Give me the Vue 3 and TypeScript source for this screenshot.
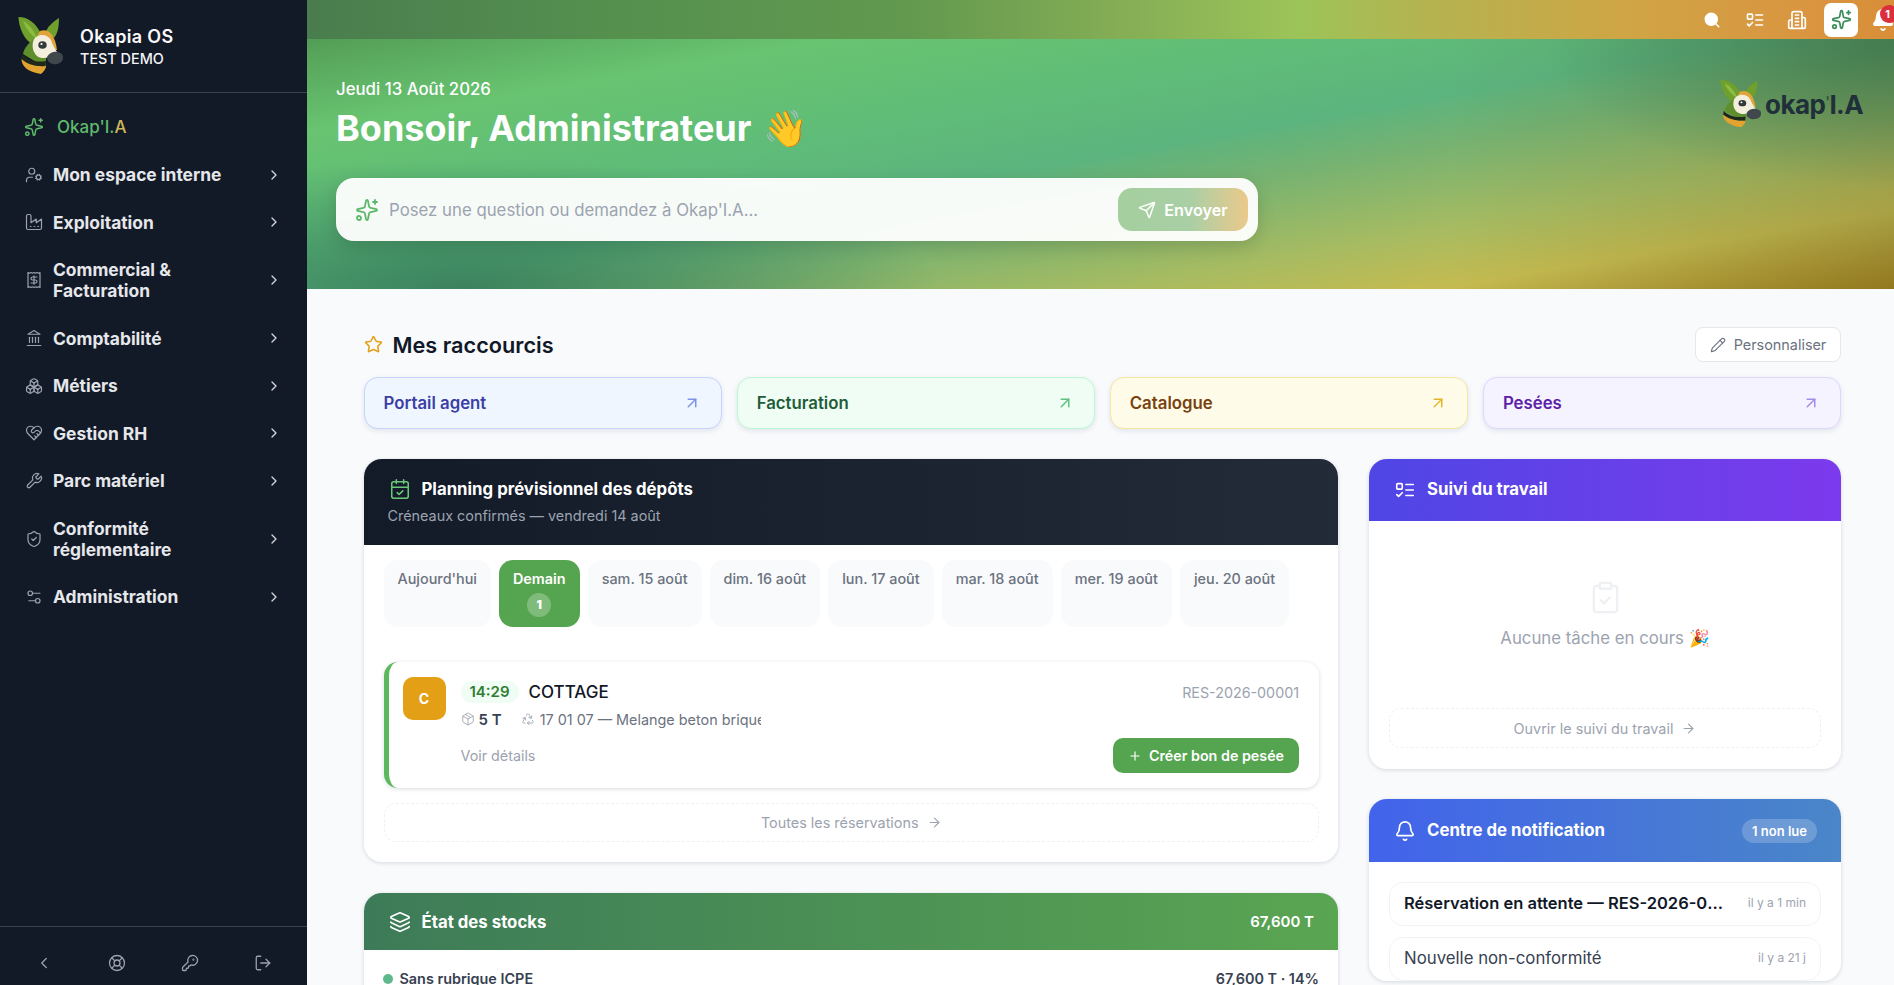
<script setup lang="ts">
// Tableau de bord Okapia : tout est statique, les icônes sont des tracés inline.
const icons: Record<string, string> = {
  sparkles:
    '<path d="M11.017 2.814a1 1 0 0 1 1.966 0l1.051 5.558a2 2 0 0 0 1.594 1.594l5.558 1.051a1 1 0 0 1 0 1.966l-5.558 1.051a2 2 0 0 0-1.594 1.594l-1.051 5.558a1 1 0 0 1-1.966 0l-1.051-5.558a2 2 0 0 0-1.594-1.594l-5.558-1.051a1 1 0 0 1 0-1.966l5.558-1.051a2 2 0 0 0 1.594-1.594z"/><path d="M20 2v4"/><path d="M22 4h-4"/><circle cx="4" cy="20" r="2"/>',
  userCog:
    '<circle cx="18" cy="15" r="3"/><circle cx="9" cy="7" r="4"/><path d="M10 15H6a4 4 0 0 0-4 4v2"/><path d="m21.7 16.4-.9-.3"/><path d="m15.2 13.9-.9-.3"/><path d="m16.6 18.7.3-.9"/><path d="m19.1 12.2.3-.9"/><path d="m19.6 18.7-.4-1"/><path d="m16.8 12.3-.4-1"/><path d="m14.3 16.6 1-.4"/><path d="m20.7 13.8 1-.4"/>',
  factory:
    '<path d="M2 20a2 2 0 0 0 2 2h16a2 2 0 0 0 2-2V8l-7 5V8l-7 5V4a2 2 0 0 0-2-2H4a2 2 0 0 0-2 2Z"/><path d="M17 18h1"/><path d="M12 18h1"/><path d="M7 18h1"/>',
  receipt:
    '<path d="M4 2v20l2-1 2 1 2-1 2 1 2-1 2 1 2-1 2 1V2l-2 1-2-1-2 1-2-1-2 1-2-1-2 1Z"/><path d="M16 8h-6a2 2 0 1 0 0 4h4a2 2 0 1 1 0 4H8"/><path d="M12 17.5v-11"/>',
  landmark:
    '<path d="M3 22h18"/><path d="M6 18v-7"/><path d="M10 18v-7"/><path d="M14 18v-7"/><path d="M18 18v-7"/><path d="M12 2l8 5H4z"/>',
  boxes:
    '<path d="M2.97 12.92A2 2 0 0 0 2 14.63v3.24a2 2 0 0 0 .97 1.71l3 1.8a2 2 0 0 0 2.06 0L12 19v-5.5l-5-3-4.03 2.42Z"/><path d="m7 16.5-4.74-2.85"/><path d="m7 16.5 5-3"/><path d="M7 16.5v5.17"/><path d="M12 13.5V19l3.97 2.38a2 2 0 0 0 2.06 0l3-1.8a2 2 0 0 0 .97-1.71v-3.24a2 2 0 0 0-.97-1.71L17 10.5l-5 3Z"/><path d="m17 16.5-5-3"/><path d="m17 16.5 4.74-2.85"/><path d="M17 16.5v5.17"/><path d="M7.97 4.42A2 2 0 0 0 7 6.13v4.37l5 3 5-3V6.13a2 2 0 0 0-.97-1.71l-3-1.8a2 2 0 0 0-2.06 0l-3 1.8Z"/><path d="M12 8 7.26 5.15"/><path d="m12 8 4.74-2.85"/><path d="M12 13.5V8"/>',
  heart:
    '<path d="M19 14c1.49-1.46 3-3.21 3-5.5A5.5 5.5 0 0 0 16.5 3c-1.76 0-3 .5-4.5 2-1.5-1.5-2.74-2-4.5-2A5.5 5.5 0 0 0 2 8.5c0 2.3 1.5 4.05 3 5.5l7 7Z"/><path d="M12 5 9.04 7.96a2.17 2.17 0 0 0 0 3.08c.82.82 2.13.85 3 .07l2.07-1.9a2.82 2.82 0 0 1 3.79 0l2.96 2.66"/><path d="m18 15-2-2"/><path d="m15 18-2-2"/>',
  wrench:
    '<path d="M14.7 6.3a1 1 0 0 0 0 1.4l1.6 1.6a1 1 0 0 0 1.4 0l3.77-3.77a6 6 0 0 1-7.94 7.94l-6.91 6.91a2.12 2.12 0 0 1-3-3l6.91-6.91a6 6 0 0 1 7.94-7.94l-3.76 3.76z"/>',
  shield:
    '<path d="M20 13c0 5-3.5 7.5-7.66 8.95a1 1 0 0 1-.67-.01C7.5 20.5 4 18 4 13V6a1 1 0 0 1 1-1c2 0 4.5-1.2 6.24-2.72a1.17 1.17 0 0 1 1.52 0C14.51 3.81 17 5 19 5a1 1 0 0 1 1 1z"/><path d="m9 12 2 2 4-4"/>',
  sliders:
    '<path d="M20 7h-9"/><path d="M14 17H5"/><circle cx="17" cy="17" r="3"/><circle cx="7" cy="7" r="3"/>',
  chevronRight: '<path d="m9 18 6-6-6-6"/>',
  chevronLeft: '<path d="m15 18-6-6 6-6"/>',
  buoy:
    '<circle cx="12" cy="12" r="10"/><path d="m4.93 4.93 4.24 4.24"/><path d="m14.83 9.17 4.24-4.24"/><path d="m14.83 14.83 4.24 4.24"/><path d="m9.17 14.83-4.24 4.24"/><circle cx="12" cy="12" r="4"/>',
  key:
    '<path d="M2.586 17.414A2 2 0 0 0 2 18.828V21a1 1 0 0 0 1 1h3a1 1 0 0 0 1-1v-1a1 1 0 0 1 1-1h1a1 1 0 0 0 1-1v-1a1 1 0 0 1 1-1h.172a2 2 0 0 0 1.414-.586l.814-.814a6.5 6.5 0 1 0-4-4z"/><circle cx="16.5" cy="7.5" r=".5"/>',
  logout:
    '<path d="M9 21H5a2 2 0 0 1-2-2V5a2 2 0 0 1 2-2h4"/><path d="m16 17 5-5-5-5"/><path d="M21 12H9"/>',
  search: '<circle cx="11" cy="11" r="8" fill="currentColor"/><path d="m21 21-4.3-4.3"/>',
  todo:
    '<rect x="3" y="5" width="6" height="6" rx="1"/><path d="m3 17 2 2 4-4"/><path d="M13 6h8"/><path d="M13 12h8"/><path d="M13 18h8"/>',
  building:
    '<path d="M6 22V4a2 2 0 0 1 2-2h8a2 2 0 0 1 2 2v18Z"/><path d="M6 12H4a2 2 0 0 0-2 2v6a2 2 0 0 0 2 2h2"/><path d="M18 9h2a2 2 0 0 1 2 2v9a2 2 0 0 1-2 2h-2"/><path d="M10 6h4"/><path d="M10 10h4"/><path d="M10 14h4"/><path d="M10 18h4"/>',
  bell:
    '<path d="M10.268 21a2 2 0 0 0 3.464 0"/><path d="M3.262 15.326A1 1 0 0 0 4 17h16a1 1 0 0 0 .74-1.673C19.41 13.956 18 12.499 18 8A6 6 0 0 0 6 8c0 4.499-1.411 5.956-2.738 7.326"/>',
  send:
    '<path d="M14.536 21.686a.5.5 0 0 0 .937-.024l6.5-19a.496.496 0 0 0-.635-.635l-19 6.5a.5.5 0 0 0-.024.937l7.93 3.18a2 2 0 0 1 1.112 1.11z"/><path d="m21.854 2.147-10.94 10.939"/>',
  star:
    '<path d="M11.525 2.295a.53.53 0 0 1 .95 0l2.31 4.679a2.123 2.123 0 0 0 1.595 1.16l5.166.756a.53.53 0 0 1 .294.904l-3.736 3.638a2.123 2.123 0 0 0-.611 1.878l.882 5.14a.53.53 0 0 1-.771.56l-4.618-2.428a2.122 2.122 0 0 0-1.973 0L6.396 21.01a.53.53 0 0 1-.77-.56l.881-5.139a2.122 2.122 0 0 0-.611-1.879L2.16 9.795a.53.53 0 0 1 .294-.906l5.165-.755a2.122 2.122 0 0 0 1.597-1.16z"/>',
  pencil:
    '<path d="M21.174 6.812a1 1 0 0 0-3.986-3.987L3.842 16.174a2 2 0 0 0-.5.83l-1.321 4.352a.5.5 0 0 0 .623.622l4.353-1.32a2 2 0 0 0 .83-.497z"/><path d="m15 5 4 4"/>',
  upRight: '<path d="M7 7h10v10"/><path d="M7 17 17 7"/>',
  calendar:
    '<path d="M8 2v4"/><path d="M16 2v4"/><rect x="3" y="4" width="18" height="18" rx="2"/><path d="M3 10h18"/><path d="m9 16 2 2 4-4"/>',
  layers:
    '<path d="M12.83 2.18a2 2 0 0 0-1.66 0L2.6 6.08a1 1 0 0 0 0 1.83l8.58 3.91a2 2 0 0 0 1.66 0l8.58-3.9a1 1 0 0 0 0-1.83z"/><path d="M2 12a1 1 0 0 0 .58.91l8.6 3.91a2 2 0 0 0 1.65 0l8.58-3.9A1 1 0 0 0 22 12"/><path d="M2 17a1 1 0 0 0 .58.91l8.6 3.91a2 2 0 0 0 1.65 0l8.58-3.9A1 1 0 0 0 22 17"/>',
  pack:
    '<path d="M11 21.73a2 2 0 0 0 2 0l7-4A2 2 0 0 0 21 16V8a2 2 0 0 0-1-1.73l-7-4a2 2 0 0 0-2 0l-7 4A2 2 0 0 0 3 8v8a2 2 0 0 0 1 1.73z"/><path d="M12 22V12"/><path d="m3.3 7 8.7 5 8.7-5"/><path d="m7.5 4.27 9 5.15"/>',
  recycle:
    '<path d="M7 19H4.815a1.83 1.83 0 0 1-1.57-.881 1.785 1.785 0 0 1-.004-1.784L7.196 9.5"/><path d="M11 19h8.203a1.83 1.83 0 0 0 1.556-.89 1.784 1.784 0 0 0 0-1.775l-1.226-2.12"/><path d="m14 16-3 3 3 3"/><path d="M8.293 13.596 7.196 9.5 3.1 10.598"/><path d="m9.344 5.811 1.093-1.892A1.83 1.83 0 0 1 11.985 3a1.784 1.784 0 0 1 1.546.888l3.943 6.843"/><path d="m13.378 9.633 4.096 1.098 1.097-4.096"/>',
  clipboard:
    '<rect x="8" y="2" width="8" height="4" rx="1"/><path d="M16 4h2a2 2 0 0 1 2 2v14a2 2 0 0 1-2 2H6a2 2 0 0 1-2-2V6a2 2 0 0 1 2-2h2"/><path d="m9 14 2 2 4-4"/>',
  arrowRight: '<path d="M5 12h14"/><path d="m12 5 7 7-7 7"/>',
  plus: '<path d="M5 12h14"/><path d="M12 5v14"/>',
};

// La tête d'okapi sert deux fois : barre latérale et bandeau.
const logoShapes = [
  { d: "M.5 1C10 1 18 7 23 18c1 4-1 10-5 12C8 27 1 14 .5 1z", fill: "#6f9f2d" },
  { d: "M5 5c6 3 11 9 14 18-6-4-11-10-14-18z", fill: "#8dbc42" },
  { d: "M41 2c0 8-1 15-5 20l-8-7c3-6 8-10 13-13z", fill: "#6f9f2d" },
  { d: "M22 15c8-3 15 3 17 19l-14 2-8-12z", fill: "#e0a43a" },
  { d: "M17 23C11 26 6 32 5 38l23 14V42z", fill: "#5f8f2c" },
  { d: "M4 38c5 6 14 9 24 7l-.5 5C17 51 9 48 3.5 43z", fill: "#20281a" },
  { d: "M3.5 43c0 7 6 13 19.500 15 3-3 5-5 5-8C17 51 9 48 3.500 43z", fill: "#e2a331" },
  { d: "M15 26c2-8 13-10 18-2 2 6 5 10 6 12-6 6-15 8-20 4-4-4-5-9-4-14z", fill: "#f3efdc" },
  { d: "M29 41c3-6 12-7 15.500-2 1.500 4-.5 8-5.500 9-6 1-10-2-10-7z", fill: "#40474d" },
];

const nav = [
  { label: "Mon espace interne", icon: "userCog" },
  { label: "Exploitation", icon: "factory" },
  { label: "Commercial & Facturation", icon: "receipt" },
  { label: "Comptabilité", icon: "landmark" },
  { label: "Métiers", icon: "boxes" },
  { label: "Gestion RH", icon: "heart" },
  { label: "Parc matériel", icon: "wrench" },
  { label: "Conformité réglementaire", icon: "shield" },
  { label: "Administration", icon: "sliders" },
];

const footerIcons = ["chevronLeft", "buoy", "key", "logout"];

const shortcuts = [
  { label: "Portail agent", tone: "blue" },
  { label: "Facturation", tone: "green" },
  { label: "Catalogue", tone: "yellow" },
  { label: "Pesées", tone: "violet" },
];

const days = [
  { label: "Aujourd'hui" },
  { label: "Demain", count: 1, active: true },
  { label: "sam. 15 août" },
  { label: "dim. 16 août" },
  { label: "lun. 17 août" },
  { label: "mar. 18 août" },
  { label: "mer. 19 août" },
  { label: "jeu. 20 août" },
];

const notifications = [
  { title: "Réservation en attente — RES-2026-00001 à valider", time: "il y a 1 min", unread: true },
  { title: "Nouvelle non-conformité", time: "il y a 21 j", unread: false },
];
</script>

<template>
  <div class="app">
    <aside class="sidebar">
      <div class="brand">
        <svg class="brand-logo" viewBox="0 0 46 60">
          <path v-for="s in logoShapes" :key="s.d" :d="s.d" :fill="s.fill" />
          <ellipse cx="24.500" cy="29" rx="4.200" ry="3.800" fill="#33393a" />
          <circle cx="23.500" cy="28" r="1.100" fill="#fff" />
        </svg>
        <div>
          <div class="brand-name">Okapia OS</div>
          <div class="brand-sub">TEST DEMO</div>
        </div>
      </div>

      <nav class="nav">
        <a class="nav-ia">
          <svg class="ic ia-icon" viewBox="0 0 24 24" v-html="icons.sparkles" />
          <span>Okap'I.<em>A</em></span>
        </a>
        <a v-for="item in nav" :key="item.label" class="nav-item">
          <svg class="ic nav-icon" viewBox="0 0 24 24" v-html="icons[item.icon]" />
          <span class="nav-label">{{ item.label }}</span>
          <svg class="ic nav-chevron" viewBox="0 0 24 24" v-html="icons.chevronRight" />
        </a>
      </nav>

      <div class="side-foot">
        <span v-for="name in footerIcons" :key="name" class="foot-btn">
          <svg class="ic" viewBox="0 0 24 24" v-html="icons[name]" />
        </span>
      </div>
    </aside>

    <main class="main">
      <section class="hero">
        <header class="topbar">
          <svg class="ic top-search" viewBox="0 0 24 24" v-html="icons.search" />
          <svg class="ic top-todo" viewBox="0 0 24 24" v-html="icons.todo" />
          <svg class="ic top-building" viewBox="0 0 24 24" v-html="icons.building" />
          <span class="top-active"><svg class="ic" viewBox="0 0 24 24" v-html="icons.sparkles" /></span>
          <span class="top-bell">
            <svg class="ic" viewBox="0 0 24 24" v-html="icons.bell" />
            <b class="bell-badge">1</b>
          </span>
        </header>

        <div class="hero-body">
          <div class="hero-left">
            <div class="hero-date">Jeudi 13 Août 2026</div>
            <h1 class="hero-title">Bonsoir, Administrateur <span class="wave">👋</span></h1>
            <div class="ask">
              <svg class="ic ask-icon" viewBox="0 0 24 24" v-html="icons.sparkles" />
              <span class="ask-text">Posez une question ou demandez à Okap'I.A...</span>
              <span class="ask-btn">
                <svg class="ic" viewBox="0 0 24 24" v-html="icons.send" />
                Envoyer
              </span>
            </div>
          </div>
          <div class="hero-logo">
            <svg class="hero-logo-mark" viewBox="0 0 46 60" preserveAspectRatio="none">
              <path v-for="s in logoShapes" :key="s.d" :d="s.d" :fill="s.fill" />
              <ellipse cx="24.500" cy="29" rx="4.200" ry="3.800" fill="#33393a" />
              <circle cx="23.500" cy="28" r="1.100" fill="#fff" />
            </svg>
            <span class="hero-logo-text">okap<small>'</small>I.A</span>
          </div>
        </div>
      </section>

      <section class="content">
        <div class="section-head">
          <svg class="ic star" viewBox="0 0 24 24" v-html="icons.star" />
          <h2>Mes raccourcis</h2>
          <span class="customize">
            <svg class="ic" viewBox="0 0 24 24" v-html="icons.pencil" />
            Personnaliser
          </span>
        </div>

        <div class="shortcuts">
          <a v-for="s in shortcuts" :key="s.label" class="shortcut" :class="s.tone">
            <span>{{ s.label }}</span>
            <svg class="ic" viewBox="0 0 24 24" v-html="icons.upRight" />
          </a>
        </div>

        <div class="columns">
          <div class="col">
            <article class="card">
              <header class="card-head dark">
                <div class="head-title">
                  <svg class="ic cal-icon" viewBox="0 0 24 24" v-html="icons.calendar" />
                  <span>Planning prévisionnel des dépôts</span>
                </div>
                <p class="head-sub">Créneaux confirmés — vendredi 14 août</p>
              </header>
              <div class="planning-body">
                <div class="days">
                  <div v-for="d in days" :key="d.label" class="day" :class="{ active: d.active }">
                    <span>{{ d.label }}</span>
                    <b v-if="d.count" class="day-count">{{ d.count }}</b>
                  </div>
                </div>

                <div class="res">
                  <div class="res-avatar">C</div>
                  <div class="res-main">
                    <div class="res-top">
                      <span class="res-time">14:29</span>
                      <span class="res-name">COTTAGE</span>
                      <span class="res-ref">RES-2026-00001</span>
                    </div>
                    <div class="res-meta">
                      <svg class="ic" viewBox="0 0 24 24" v-html="icons.pack" />
                      <b>5 T</b>
                      <svg class="ic meta-recycle" viewBox="0 0 24 24" v-html="icons.recycle" />
                      <span class="meta-waste">17 01 07 — Melange beton brique tuile ceramique</span>
                    </div>
                    <div class="res-actions">
                      <span class="res-link">Voir détails</span>
                      <span class="res-btn">
                        <svg class="ic" viewBox="0 0 24 24" v-html="icons.plus" />
                        Créer bon de pesée
                      </span>
                    </div>
                  </div>
                </div>

                <a class="dashed">
                  Toutes les réservations
                  <svg class="ic" viewBox="0 0 24 24" v-html="icons.arrowRight" />
                </a>
              </div>
            </article>

            <article class="card">
              <header class="card-head stock">
                <svg class="ic" viewBox="0 0 24 24" v-html="icons.layers" />
                <span class="head-name">État des stocks</span>
                <b class="stock-total">67,600 T</b>
              </header>
              <div class="stock-body">
                <div class="stock-row">
                  <i class="dot" />
                  <span>Sans rubrique ICPE</span>
                  <b>67,600 T · 14%</b>
                </div>
              </div>
            </article>
          </div>

          <div class="col right">
            <article class="card">
              <header class="card-head violet">
                <svg class="ic" viewBox="0 0 24 24" v-html="icons.todo" />
                <span class="head-name">Suivi du travail</span>
              </header>
              <div class="todo-body">
                <div class="empty">
                  <svg class="ic" viewBox="0 0 24 24" v-html="icons.clipboard" />
                  <p>Aucune tâche en cours 🎉</p>
                </div>
                <a class="dashed">
                  Ouvrir le suivi du travail
                  <svg class="ic" viewBox="0 0 24 24" v-html="icons.arrowRight" />
                </a>
              </div>
            </article>

            <article class="card">
              <header class="card-head blue">
                <svg class="ic" viewBox="0 0 24 24" v-html="icons.bell" />
                <span class="head-name">Centre de notification</span>
                <span class="unread-pill">1 non lue</span>
              </header>
              <div class="notif-body">
                <div v-for="n in notifications" :key="n.time" class="notif" :class="{ 'is-unread': n.unread }">
                  <span class="notif-title">{{ n.title }}</span>
                  <span class="notif-time">{{ n.time }}</span>
                </div>
              </div>
            </article>
          </div>
        </div>
      </section>
    </main>
  </div>
</template>

<style>
html,
body {
  margin: 0;
  height: 100%;
  overflow: hidden;
}
</style>

<style scoped>
.app {
  display: flex;
  height: 985px;
  overflow: hidden;
  font-family: Inter, "Noto Sans", sans-serif;
  background: #f8fafc;
}
.ic {
  fill: none;
  stroke: currentColor;
  stroke-width: 2;
  stroke-linecap: round;
  stroke-linejoin: round;
  flex: none;
}

/* sidebar */
.sidebar {
  width: 307px;
  flex: none;
  display: flex;
  flex-direction: column;
  background: #121927;
}
.brand {
  height: 93px;
  flex: none;
  box-sizing: border-box;
  display: flex;
  align-items: center;
  gap: 16px;
  padding: 0 18px;
  border-bottom: 1px solid #3a4250;
}
.brand-logo {
  width: 46px;
  height: 60px;
  flex: none;
}
.brand-name {
  color: #f9fafb;
  font-size: 18px;
  font-weight: 600;
  line-height: 24px;
  letter-spacing: 0.3px;
}
.brand-sub {
  color: #f1f3f5;
  font-size: 14.4px;
  font-weight: 500;
  line-height: 19px;
}
.nav {
  flex: 1;
  padding-top: 9px;
}
.nav-ia {
  display: flex;
  align-items: center;
  gap: 13px;
  height: 49px;
  padding-left: 24px;
  color: #5fb96b;
  font-size: 17px;
  font-weight: 500;
}
.nav-ia em {
  font-style: normal;
  color: #cdb85b;
}
.ia-icon {
  width: 20px;
  height: 20px;
  stroke-width: 1.8;
}
.nav-item {
  display: flex;
  align-items: center;
  padding: 13.25px 25px;
  color: #e5e7eb;
  font-size: 17.4px;
  font-weight: 700;
  line-height: 21px;
}
.nav-icon {
  width: 18px;
  height: 18px;
  margin-right: 10px;
  color: #9ca3af;
  stroke-width: 1.6;
}
.nav-label {
  flex: 1;
  max-width: 190px;
}
.nav-chevron {
  width: 16px;
  height: 16px;
  margin-left: auto;
  color: #d1d5db;
}
.side-foot {
  height: 59px;
  flex: none;
  box-sizing: border-box;
  display: grid;
  grid-template-columns: repeat(4, 1fr);
  padding: 14px 8px 0;
  border-top: 1px solid #3a4250;
  color: #9ca3af;
}
.foot-btn {
  display: flex;
  align-items: center;
  justify-content: center;
}
.foot-btn .ic {
  width: 18px;
  height: 18px;
  stroke-width: 1.7;
}

/* hero */
.main {
  flex: 1;
  min-width: 0;
  overflow: hidden;
}
.hero {
  height: 289px;
  background:
    linear-gradient(90deg, rgba(70, 70, 30, 0) 72%, rgba(70, 70, 30, 0.22) 100%),
    radial-gradient(ellipse 30% 45% at 10% 100%, rgba(55, 125, 90, 0.9), rgba(55, 125, 90, 0) 100%),
    radial-gradient(ellipse 22% 50% at 100% 15%, rgba(55, 125, 85, 0.75), rgba(55, 125, 85, 0) 100%),
    linear-gradient(170deg, #448a4c 0%, #55a058 8%, #68c470 23%, #5fbc78 40%, #5cb47e 52%, #74b272 60%, #a5bb62 75%, #c5bb50 86%, #a8851f 100%);
}
.topbar {
  height: 39px;
  display: flex;
  align-items: center;
  justify-content: flex-end;
  color: #fff;
  overflow: hidden;
  background: linear-gradient(90deg, #4a7d4e 0%, #55904f 19%, #62994f 38%, #84ad55 51%, #9cc458 62.500%, #b3b451 70%, #cfa545 83%, #da9440 95%, #d98e38 100%);
}
.top-search {
  width: 18px;
  height: 18px;
  margin-right: 24px;
}
.top-todo {
  width: 20px;
  height: 20px;
  margin-right: 22px;
}
.top-building {
  width: 20px;
  height: 20px;
  margin-right: 17px;
}
.top-active {
  width: 34px;
  height: 34px;
  margin-right: 13px;
  border-radius: 7px;
  background: #fff;
  color: #3f8f5c;
  display: flex;
  align-items: center;
  justify-content: center;
  flex: none;
}
.top-active .ic {
  width: 21px;
  height: 21px;
}
.top-bell {
  position: relative;
  width: 24px;
  height: 24px;
  margin-right: -1px;
  display: flex;
  align-items: center;
  flex: none;
}
.top-bell .ic {
  width: 24px;
  height: 24px;
  fill: #fff;
}
.bell-badge {
  position: absolute;
  top: -3px;
  left: 9px;
  width: 18px;
  height: 18px;
  border-radius: 50%;
  background: #dc2f3c;
  color: #fff;
  font-size: 11px;
  font-weight: 700;
  line-height: 18px;
  text-align: center;
  text-indent: -3px;
}
.hero-body {
  display: flex;
  justify-content: space-between;
  padding: 40px 31px 0 29px;
}
.hero-left {
  width: 922px;
}
.hero-date {
  color: #fff;
  font-size: 16.800px;
  font-weight: 500;
  line-height: 20px;
}
.hero-title {
  margin: 6px 0 0;
  color: #fff;
  font-size: 36px;
  font-weight: 700;
  line-height: 46px;
}
.wave {
  margin-left: 3px;
}
.ask {
  margin-top: 27px;
  height: 63px;
  box-sizing: border-box;
  display: flex;
  align-items: center;
  padding: 0 10px 0 19px;
  border-radius: 18px;
  background: rgba(255, 255, 255, 0.95);
  box-shadow: 0 6px 18px rgba(0, 0, 0, 0.14);
}
.ask-icon {
  width: 24px;
  height: 24px;
  color: #5cb868;
  stroke-width: 1.8;
}
.ask-text {
  flex: 1;
  margin-left: 10px;
  color: #9ca3af;
  font-size: 16.800px;
}
.ask-btn {
  width: 130px;
  height: 43px;
  display: flex;
  align-items: center;
  justify-content: center;
  gap: 8px;
  border-radius: 14px;
  background: linear-gradient(90deg, #a5cf9f 0%, #a9cfa5 55%, #ebc98b 100%);
  color: #fff;
  font-size: 16.200px;
  font-weight: 600;
}
.ask-btn .ic {
  width: 18px;
  height: 18px;
}
.hero-logo {
  display: flex;
  align-items: center;
  gap: 3px;
  height: 50px;
}
.hero-logo-mark {
  width: 42px;
  height: 50px;
  flex: none;
}
.hero-logo-text {
  color: #20303a;
  font-size: 26px;
  font-weight: 700;
  letter-spacing: -0.6px;
}
.hero-logo-text small {
  font-size: 14px;
  vertical-align: 7px;
  color: #2f5a3a;
}

/* contenu */
.content {
  padding: 38px 53px 0 56.5px;
}
.section-head {
  display: flex;
  align-items: center;
  height: 35px;
}
.star {
  width: 19px;
  height: 19px;
  color: #e5a11c;
}
.section-head h2 {
  margin: 0 0 0 10px;
  font-size: 21.700px;
  font-weight: 600;
  color: #111827;
}
.customize {
  margin-left: auto;
  width: 146px;
  height: 35px;
  box-sizing: border-box;
  display: flex;
  align-items: center;
  justify-content: center;
  gap: 8px;
  border: 1px solid #e5e7eb;
  border-radius: 8px;
  background: #fff;
  color: #6b7280;
  font-size: 14.400px;
}
.customize .ic {
  width: 16px;
  height: 16px;
  stroke-width: 1.7;
}
.shortcuts {
  display: grid;
  grid-template-columns: repeat(4, 1fr);
  gap: 15px;
  margin-top: 15px;
}
.shortcut {
  height: 52px;
  box-sizing: border-box;
  display: flex;
  align-items: center;
  justify-content: space-between;
  padding: 0 20px 0 19px;
  border: 1.5px solid;
  border-radius: 14px;
  font-size: 16.800px;
  font-weight: 600;
  box-shadow: 0 2px 5px rgba(60, 70, 110, 0.12);
}
.shortcut .ic {
  width: 18px;
  height: 18px;
}
.shortcut.blue {
  background: #eff6ff;
  border-color: #c7d2fe;
  color: #3b3fa5;
}
.shortcut.blue .ic {
  color: #7c93e8;
}
.shortcut.green {
  background: #f0fdf4;
  border-color: #bbf7d0;
  color: #1f5c38;
}
.shortcut.green .ic {
  color: #5fc27f;
}
.shortcut.yellow {
  background: #fefce8;
  border-color: #f5e6a0;
  color: #78410f;
}
.shortcut.yellow .ic {
  color: #e3b52a;
}
.shortcut.violet {
  background: #f5f3ff;
  border-color: #ddd6fe;
  color: #5b21a6;
}
.shortcut.violet .ic {
  color: #a48be8;
}
.columns {
  display: grid;
  grid-template-columns: 974.5px minmax(0, 1fr);
  gap: 31px;
  margin-top: 30px;
}
.col {
  display: flex;
  flex-direction: column;
  gap: 31px;
  min-width: 0;
}
.col.right {
  gap: 30px;
}
.card {
  border-radius: 18px;
  background: #fff;
  box-shadow: 0 1px 4px rgba(15, 23, 42, 0.14);
  overflow: hidden;
  flex: none;
}
.card-head {
  color: #fff;
  display: flex;
  align-items: center;
  padding: 0 20px 0 25px;
}
.card-head > .ic {
  width: 22px;
  height: 22px;
  stroke-width: 1.8;
}
.head-name {
  margin-left: 11px;
  font-size: 16.800px;
  font-weight: 700;
}
.violet .head-name,
.blue .head-name {
  padding-bottom: 2px;
}
.card-head.dark {
  height: 86px;
  box-sizing: border-box;
  display: block;
  padding: 19px 24px 0;
  background: linear-gradient(90deg, #131a28, #222b37);
}
.head-title {
  display: flex;
  align-items: center;
  gap: 11px;
  font-size: 16.800px;
  font-weight: 700;
  line-height: 22px;
}
.cal-icon {
  width: 22px;
  height: 22px;
  color: #6cc77a;
  stroke-width: 1.7;
  margin-left: 1px;
}
.head-sub {
  margin: 7px 0 0;
  color: #9ca3af;
  font-size: 14.400px;
  line-height: 18px;
}
.planning-body {
  padding: 15px 19px 20px 20px;
}
.days {
  display: flex;
  gap: 8px;
}
.day {
  min-height: 67px;
  box-sizing: border-box;
  display: flex;
  flex-direction: column;
  align-items: center;
  gap: 4px;
  padding: 9px 14px;
  border-radius: 14px;
  background: #f9fafb;
  color: #6b7280;
  font-size: 14.400px;
  line-height: 20px;
  font-weight: 500;
}
.day.active {
  background: #55a44f;
  color: #fff;
  font-weight: 600;
}
.day-count {
  width: 24px;
  height: 24px;
  border-radius: 50%;
  background: rgba(255, 255, 255, 0.25);
  font-size: 12px;
  line-height: 24px;
  text-align: center;
}
.res {
  margin-top: 35px;
  height: 126px;
  box-sizing: border-box;
  display: flex;
  gap: 15px;
  padding: 15px 20px 14px 14px;
  border-left: 5px solid #5cb85c;
  border-radius: 14px;
  background: #fff;
  box-shadow: 0 1px 4px rgba(15, 23, 42, 0.16);
}
.res-avatar {
  width: 43px;
  height: 43px;
  flex: none;
  border-radius: 10px;
  background: #e39f15;
  color: #fff;
  font-size: 14px;
  font-weight: 700;
  display: flex;
  align-items: center;
  justify-content: center;
}
.res-main {
  flex: 1;
  min-width: 0;
  padding-top: 4px;
}
.res-top {
  display: flex;
  align-items: center;
  height: 22px;
}
.res-time {
  height: 22px;
  padding: 0 9px;
  border-radius: 11px;
  background: #f0fdf4;
  color: #2f7d32;
  font-size: 15px;
  font-weight: 600;
  line-height: 22px;
}
.res-name {
  margin-left: 10px;
  color: #111827;
  font-size: 17px;
  font-weight: 500;
}
.res-ref {
  margin-left: auto;
  color: #9ca3af;
  font-size: 14.300px;
}
.res-meta {
  display: flex;
  align-items: center;
  height: 20px;
  margin-top: 6px;
  color: #6b7280;
  font-size: 14.400px;
}
.res-meta .ic {
  width: 14px;
  height: 14px;
  stroke-width: 1.5;
  color: #9ca3af;
}
.res-meta b {
  margin-left: 4px;
  color: #374151;
  font-size: 15px;
  font-weight: 600;
}
.res-meta .meta-recycle {
  margin-left: 19px;
}
.meta-waste {
  width: 221px;
  margin-left: 5px;
  overflow: hidden;
  white-space: nowrap;
}
.res-actions {
  display: flex;
  align-items: center;
  justify-content: space-between;
  margin-top: 9px;
}
.res-link {
  color: #9ca3af;
  font-size: 14.300px;
}
.res-btn {
  height: 35px;
  width: 186px;
  display: flex;
  align-items: center;
  justify-content: center;
  gap: 7px;
  border-radius: 10px;
  background: #55a44f;
  color: #fff;
  font-size: 14.300px;
  font-weight: 600;
}
.res-btn .ic {
  width: 14px;
  height: 14px;
}
.dashed {
  display: flex;
  align-items: center;
  justify-content: center;
  gap: 8px;
  height: 39px;
  box-sizing: border-box;
  margin-top: 15px;
  border: 1px dashed #eef0f3;
  border-radius: 12px;
  color: #9ca3af;
  font-size: 14.400px;
}
.dashed .ic {
  width: 15px;
  height: 15px;
  stroke-width: 1.7;
}
.card-head.stock {
  height: 57px;
  padding-right: 24px;
  background: linear-gradient(90deg, #3d7b58, #5aa552);
}
.stock-total {
  margin-left: auto;
  font-size: 15px;
  font-weight: 600;
}
.stock-body {
  padding: 20px 19px;
}
.stock-row {
  display: flex;
  align-items: center;
  color: #374151;
  font-size: 14.400px;
  font-weight: 600;
  line-height: 18px;
}
.dot {
  width: 10px;
  height: 10px;
  border-radius: 50%;
  background: #5fb88b;
  margin-right: 7px;
}
.stock-row b {
  margin-left: auto;
  font-weight: 600;
}
.card-head.violet {
  height: 62px;
  background: linear-gradient(90deg, #4f46e5, #7c3aed);
}
.todo-body {
  padding: 0 20px 21px;
}
.empty {
  height: 187px;
  display: flex;
  flex-direction: column;
  align-items: center;
  justify-content: center;
  padding-top: 1px;
  box-sizing: border-box;
  color: #9ca3af;
}
.empty .ic {
  width: 35px;
  height: 35px;
  color: #eef0f3;
  stroke-width: 1.6;
}
.empty p {
  margin: 11px 0 0;
  font-size: 16.800px;
  line-height: 24px;
}
.todo-body .dashed {
  height: 40px;
  margin-top: 0;
}
.card-head.blue {
  height: 63px;
  background: linear-gradient(90deg, #4263eb, #4a86c8);
}
.unread-pill {
  margin-left: auto;
  margin-right: 4px;
  padding: 0 10px;
  height: 24px;
  border-radius: 12px;
  background: rgba(255, 255, 255, 0.2);
  font-size: 13px;
  font-weight: 600;
  line-height: 24px;
}
.notif-body {
  padding: 20px 20px 0;
  display: flex;
  flex-direction: column;
  gap: 11px;
}
.notif {
  height: 44px;
  box-sizing: border-box;
  flex: none;
  display: flex;
  align-items: center;
  gap: 16px;
  padding: 0 14px 3px 14px;
  border: 1px solid #f1f3f5;
  border-radius: 14px;
  background: #fff;
  color: #374151;
  font-size: 16.800px;
}
.notif.is-unread {
  color: #111827;
  font-size: 16.500px;
  font-weight: 600;
}
.notif-title {
  flex: 1;
  min-width: 0;
  overflow: hidden;
  white-space: nowrap;
  text-overflow: ellipsis;
}
.notif-time {
  flex: none;
  color: #9ca3af;
  font-size: 12px;
  font-weight: 400;
}
</style>
